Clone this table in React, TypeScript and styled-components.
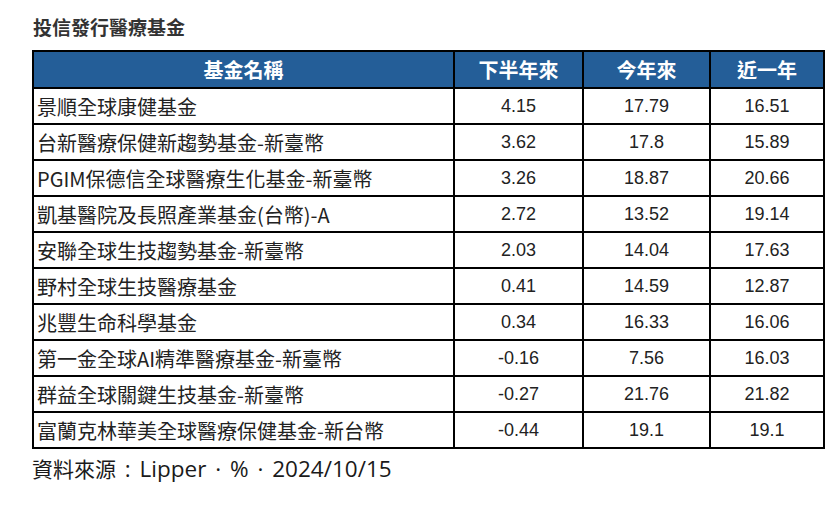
import styled, { createGlobalStyle } from "styled-components";

const funds = [
  { name: "景順全球康健基金", h2: "4.15", ytd: "17.79", y1: "16.51" },
  { name: "台新醫療保健新趨勢基金-新臺幣", h2: "3.62", ytd: "17.8", y1: "15.89" },
  { name: "PGIM保德信全球醫療生化基金-新臺幣", h2: "3.26", ytd: "18.87", y1: "20.66" },
  { name: "凱基醫院及長照產業基金(台幣)-A", h2: "2.72", ytd: "13.52", y1: "19.14" },
  { name: "安聯全球生技趨勢基金-新臺幣", h2: "2.03", ytd: "14.04", y1: "17.63" },
  { name: "野村全球生技醫療基金", h2: "0.41", ytd: "14.59", y1: "12.87" },
  { name: "兆豐生命科學基金", h2: "0.34", ytd: "16.33", y1: "16.06" },
  { name: "第一金全球AI精準醫療基金-新臺幣", h2: "-0.16", ytd: "7.56", y1: "16.03" },
  { name: "群益全球關鍵生技基金-新臺幣", h2: "-0.27", ytd: "21.76", y1: "21.82" },
  { name: "富蘭克林華美全球醫療保健基金-新台幣", h2: "-0.44", ytd: "19.1", y1: "19.1" },
];

export default function App() {
  return (
    <>
      <GlobalStyle />
      <Page>
        <Title>投信發行醫療基金</Title>
        <Table>
          <colgroup>
            <col style={{ width: 421 }} />
            <col style={{ width: 129 }} />
            <col style={{ width: 127 }} />
            <col style={{ width: 114 }} />
          </colgroup>
          <thead>
            <tr>
              <HeadCell>基金名稱</HeadCell>
              <HeadCell>下半年來</HeadCell>
              <HeadCell>今年來</HeadCell>
              <HeadCell>近一年</HeadCell>
            </tr>
          </thead>
          <tbody>
            {funds.map((f) => (
              <tr key={f.name}>
                <NameCell>{f.name}</NameCell>
                <NumCell>{f.h2}</NumCell>
                <NumCell>{f.ytd}</NumCell>
                <NumCell>{f.y1}</NumCell>
              </tr>
            ))}
          </tbody>
        </Table>
        <Source>
          <SourceCjk>資料來源</SourceCjk> : Lipper · % · 2024/10/15
        </Source>
      </Page>
    </>
  );
}

const GlobalStyle = createGlobalStyle`
  body {
    margin: 0;
    background: #ffffff;
    font-family: "Liberation Sans", "Noto Sans CJK TC", sans-serif;
  }
`;

const Page = styled.div`
  padding: 16px 0 0 32px;
`;

const Title = styled.h1`
  margin: 0 0 12px 1px;
  font-family: "Noto Sans CJK TC", sans-serif;
  font-size: 19px;
  font-weight: 700;
  line-height: 22px;
  color: #333333;
`;

const Table = styled.table`
  border-collapse: collapse;
  table-layout: fixed;
  width: 791px;
  border: 2px solid #000000;
`;

const HeadCell = styled.th`
  height: 35px;
  padding: 0;
  border: 2px solid #000000;
  background: #245e98;
  color: #ffffff;
  font-family: "Noto Sans CJK TC", sans-serif;
  font-size: 20px;
  font-weight: 700;
  text-align: center;
`;

const NameCell = styled.td`
  height: 34px;
  padding: 0 0 0 3px;
  border: 2px solid #000000;
  font-family: "Noto Sans CJK TC", sans-serif;
  font-size: 20px;
  color: #222222;
  white-space: nowrap;
`;

const NumCell = styled.td`
  height: 34px;
  padding: 0;
  border: 2px solid #000000;
  font-family: "Liberation Sans", sans-serif;
  font-size: 18px;
  color: #222222;
  text-align: center;
`;

const Source = styled.p`
  margin: 5px 0 0 0;
  font-family: "Open Sans", "Noto Sans CJK TC", sans-serif;
  font-size: 22.5px;
  font-weight: 500;
  line-height: 28px;
  word-spacing: 3px;
  color: #1a1a1a;
`;

const SourceCjk = styled.span`
  font-family: "Noto Sans CJK TC", sans-serif;
  font-size: 21px;
  font-weight: 400;
`;
